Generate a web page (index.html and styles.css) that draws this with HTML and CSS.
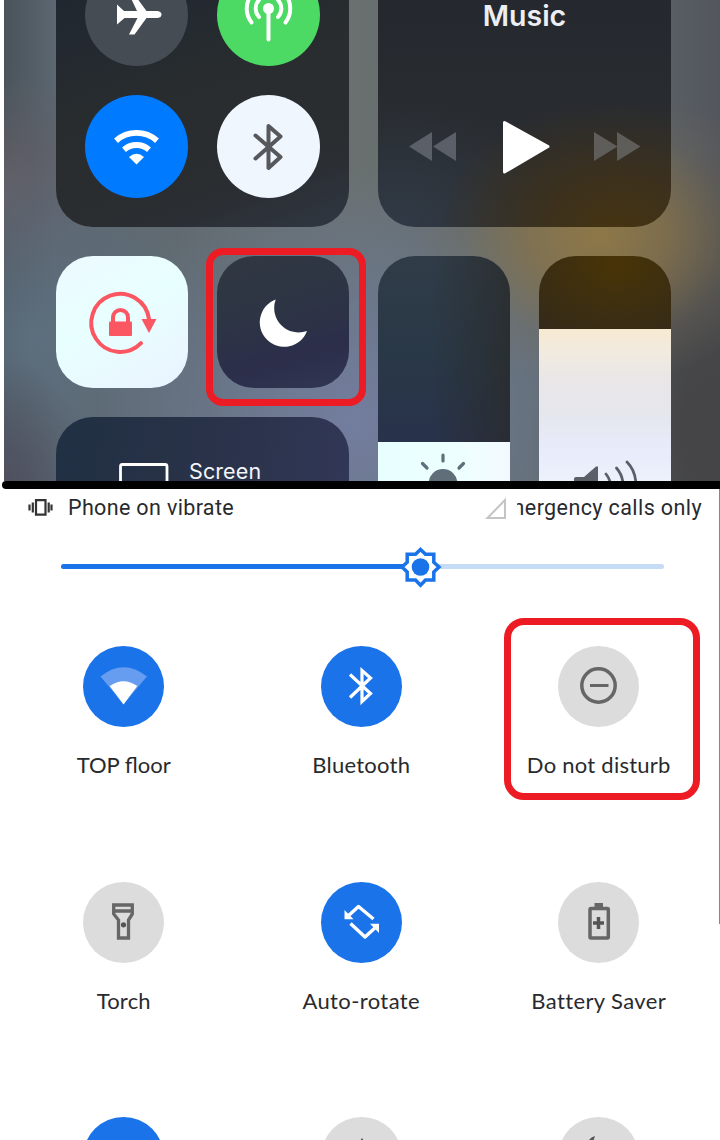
FILE: index.html
```html
<!DOCTYPE html>
<html lang="en">
<head>
<meta charset="utf-8">
<title>Do Not Disturb controls</title>
<link rel="stylesheet" href="styles.css">
</head>
<body>
<main class="page">
  <section class="control-center">
    <div class="tile connectivity">
      <div class="round airplane"><svg viewBox="85 -37 103 103"><path d="M117 4.500L124 11H137L129-6H134L146.500 11H157.500Q161.500 11.500 161.500 14.500T157.500 18H146.500L134.500 34.500H129L137.500 18H124.500L117 24.500Z" fill="#fff"/></svg></div>
      <div class="round cellular"><svg viewBox="217 -37 103 103"><g fill="none" stroke="#fff" stroke-width="4" stroke-linecap="round"><path d="M268.500 9v30.500M259 17a12.500 12.500 0 0 1 0-17M278 17a12.500 12.500 0 0 0 0-17M251.500 22.500a23 23 0 0 1 0-28M285.500 22.500a23 23 0 0 0 0-28"/></g><circle cx="268.500" cy="8.500" r="5.500" fill="#fff"/></svg></div>
      <div class="round wifi"><svg viewBox="85 95 103 103"><path d="M116 140.700a31 31 0 0 1 41 0M124 149.700a19 19 0 0 1 25 0" fill="none" stroke="#fff" stroke-width="5.800" stroke-linejoin="round"/><path d="M136.500 164.500l-7.500-7.500q7.500-6.500 15 0z" fill="#fff"/></svg></div>
      <div class="round bluetooth"><svg viewBox="217 95 103 103"><path d="M255.500 135.500l25 21.500-12 11v-42l12 10.500-25 22" fill="none" stroke="#56585c" stroke-width="4" stroke-linecap="round" stroke-linejoin="round"/></svg></div>
    </div>
    <div class="tile music">
      <div class="music-title">Music</div>
      <svg class="player" viewBox="378 112 293 70"><path d="M409 146.500l23-14.500v29zM433 146.500l23-14.500v29z" fill="#5b5f68"/><path d="M504.500 122.500v49.500l43.500-25.500z" fill="#fff" stroke="#fff" stroke-width="3" stroke-linejoin="round"/><path d="M594 132v29l23.500-14.500zM617 132v29l23.500-14.500z" fill="#5e5d5a"/></svg>
    </div>
    <div class="tile lock"><svg viewBox="56 256 132 132"><path d="M141 343.200A29 29 0 1 1 149 319" fill="none" stroke="#fb5763" stroke-width="4" stroke-linecap="round"/><path d="M141.500 319h15l-7.500 14z" fill="#fb5763"/><rect x="109" y="321.500" width="23" height="14.500" rx="1" fill="#fb5763"/><path d="M113 322v-4.500a7.500 7.500 0 0 1 15 0v4.500" fill="none" stroke="#fb5763" stroke-width="4"/></svg></div>
    <div class="tile dnd"><svg viewBox="217 256 132 132"><path d="M275.700 299.500A24.400 24.400 0 1 0 307 331 24.500 24.500 0 0 1 275.700 299.500z" fill="#fff"/></svg><span class="marker marker-moon"></span></div>
    <div class="tile brightness"><svg class="fill bright-fill" viewBox="378 442 132 39"><g fill="#5f6e78" stroke="#5f6e78" stroke-width="3.200" stroke-linecap="round"><circle cx="443" cy="483.500" r="12.800"/><path d="M443 455v6M422.500 463.500l4.500 4.500M463.500 463.500l-4.500 4.500"/></g></svg></div>
    <div class="tile volume"><svg class="fill volume-fill" viewBox="539 329 132 152"><path d="M574 492v-13q0-2 2-2h8l12-10.500h2V492z" fill="#5b5f67"/><path d="M606 474q4 5 5 12M616.500 468q6 7 6.500 16M627 462q9 9 9 24" fill="none" stroke="#5b5f67" stroke-width="2.800" stroke-linecap="round"/></svg></div>
    <div class="tile mirroring"><svg class="display-icon" viewBox="119 463 50 18"><rect x="120.500" y="464.500" width="46.500" height="40" rx="2" fill="none" stroke="#fff" stroke-width="2.800"/></svg><span class="mirroring-text">Screen</span></div>
  </section>
  <div class="divider"></div>
  <section class="quick-settings">
    <header class="status">
      <svg class="vibrate-icon" viewBox="28 496 25 21"><path d="M36 499.200h9.500v14.500H36zM32.800 501.500v10M29.500 503.500v6M48.700 501.500v10M51.500 503.500v6" fill="none" stroke="#333" stroke-width="2.200"/></svg>
      <span class="vibrate-text">Phone on vibrate</span>
      <svg class="signal-icon" viewBox="485 496 22 22"><path d="M487.500 517l17.500-18v18z" fill="none" stroke="#c4c4c4" stroke-width="2"/></svg>
      <span class="carrier"><span>Emergency calls only</span></span>
    </header>
    <div class="slider"><span class="level"></span>
      <svg class="thumb" viewBox="399 545 44 44"><path d="M420.500 549.500l5 4.800h8.300v8l5.200 4.700-5.200 4.900v8.200h-8.300l-5 5.200-5-5.200h-8.300v-8.200l-5.200-4.900 5.200-4.700v-8h8.300z" fill="#fff" stroke="#1a73e8" stroke-width="3.500"/><circle cx="420.500" cy="567" r="8.800" fill="#1a73e8"/></svg>
    </div>
    <div class="tiles">
      <div class="qs"><div class="disc on"><svg viewBox="83 646 81 81"><path d="M123.500 704l-23-27.500q23-18.500 46.500 0z" fill="#679df1"/><path d="M123.500 704.500L109.700 686q13.800-9.500 27.600 0z" fill="#fff"/></svg></div><span class="label top-floor">TOP floor</span></div>
      <div class="qs"><div class="disc on"><svg viewBox="320.500 646 81 81"><path d="M349.500 674.500l20.500 19-8.500 8v-31l8.500 7.500-20.500 19.500" fill="none" stroke="#fff" stroke-width="3.200"/></svg></div><span class="label bt">Bluetooth</span></div>
      <div class="qs"><div class="disc"><svg viewBox="558 646 81 81"><circle cx="598.500" cy="685.500" r="16.700" fill="none" stroke="#666" stroke-width="3.500"/><path d="M590 685.500h18.500" stroke="#666" stroke-width="3"/></svg></div><span class="label disturb">Do not disturb</span><span class="marker marker-disturb"></span></div>
      <div class="qs"><div class="disc"><svg viewBox="83 882 81 81"><path d="M113.700 905h18.600v9l-3.800 6v18h-10v-18l-4.800-6zM114 911h18" fill="none" stroke="#666" stroke-width="3.300"/><circle cx="123.500" cy="924.800" r="2.600" fill="#555"/></svg></div><span class="label torch">Torch</span></div>
      <div class="qs"><div class="disc on"><svg viewBox="320.500 882 81 81"><path d="M373 919l-15-12.500-11 10M350 923.500l14.500 13.500 11-10" fill="none" stroke="#fff" stroke-width="3.400" stroke-linejoin="round"/><path d="M344 910v9.200h9zM378.500 933v-9.200h-9z" fill="#fff"/></svg></div><span class="label rotate">Auto-rotate</span></div>
      <div class="qs"><div class="disc"><svg viewBox="558 882 81 81"><rect x="590" y="908.500" width="18.300" height="29.500" rx="1" fill="none" stroke="#666" stroke-width="3.500"/><path d="M594.500 903h8.500v5h-8.500z" fill="#666"/><path d="M598.500 917v12M593 923h11" stroke="#555" stroke-width="3.500"/></svg></div><span class="label battery">Battery Saver</span></div>
      <div class="qs"><div class="disc on"></div></div>
      <div class="qs"><div class="disc"><svg viewBox="320.500 1117 81 81"><path d="M359.500 1141l2-3 2 3z" fill="#555"/></svg></div></div>
      <div class="qs"><div class="disc"><svg viewBox="558 1117 81 81"><path d="M588 1142q2-5 7-6l-2 6z" fill="#555"/></svg></div></div>
    </div>
    <span class="scroll-edge"></span>
  </section>
</main>
</body>
</html>
```
FILE: styles.css
```css
* { box-sizing: border-box; }
body { margin: 0; background: #fff; }
svg { display: block; }
.page { width: 720px; height: 1140px; overflow: hidden; }

.control-center {
  height: 481px;
  margin-left: 4px;
  padding-left: 52px;
  display: grid;
  grid-template-columns: repeat(4, 132px);
  grid-template-rows: 227px 132px 64px;
  gap: 29px;
  background:
    radial-gradient(ellipse 190px 150px at 595px 235px, rgba(144,120,70,.95) 0%, rgba(138,116,72,.75) 35%, rgba(120,108,84,.25) 72%, rgba(115,108,90,0) 100%),
    radial-gradient(ellipse 190px 280px at 716px 430px, #454547 20%, rgba(72,72,75,0) 100%),
    radial-gradient(ellipse 260px 250px at 350px 420px, #737d9f 0%, rgba(108,122,148,.7) 50%, rgba(105,118,135,0) 100%),
    radial-gradient(ellipse 90px 130px at 0 490px, #50505f 0%, rgba(78,84,102,0) 100%),
    radial-gradient(ellipse 180px 190px at 30px 340px, rgba(94,112,128,.9) 0%, rgba(98,112,126,0) 100%),
    radial-gradient(ellipse 100px 120px at 0 185px, #625e66 0%, rgba(98,94,102,0) 100%),
    linear-gradient(90deg, #48535a 0, #5b6670 50px, #69706f 350px, #5f696c 600px, #53565d 716px);
}
.tile { border-radius: 37px; background: #2b303a; }
.tile svg { width: 100%; }
.connectivity {
  grid-column: span 2;
  border-radius: 0 0 37px 37px;
  padding: 0 29px;
  overflow: hidden;
  display: grid;
  grid-template-columns: 103px 103px;
  grid-template-rows: 103px 103px;
  gap: 29px;
  background: linear-gradient(160deg, #202730 0%, #292d2f 45%, #2a2d31 75%, #303742 100%);
}
.round { border-radius: 50%; transform: translateY(-37px); }
.airplane { background: #454c54; }
.cellular { background: #4cd964; }
.wifi { background: #007aff; }
.bluetooth { background: #eff6fe; }
.music {
  grid-column: span 2;
  border-radius: 0 0 37px 37px;
  display: flex;
  flex-direction: column;
  justify-content: space-between;
  padding-bottom: 45px;
  background:
    radial-gradient(ellipse 180px 125px at 240px 227px, #453412 0%, rgba(66,50,22,.75) 40%, rgba(50,45,38,0) 100%),
    radial-gradient(ellipse 160px 130px at 20px 227px, #303a46 0%, rgba(46,54,65,0) 100%),
    linear-gradient(#25292f, #2c2e31);
}
.music-title {
  height: 32px;
  text-align: center;
  font: 600 28.500px/32px Inter, sans-serif;
  color: #eceef2;
}
.lock { background: linear-gradient(150deg, #edfaff, #e8ffff 45%, #eaf3ff); }
.dnd { position: relative; background: linear-gradient(165deg, #303841, #2d3445 45%, #2c2e4a 72%, #303652); }
.brightness, .volume { grid-row: 2 / span 2; height: 225px; border-radius: 37px 37px 0 0; overflow: hidden; display: flex; flex-direction: column; justify-content: flex-end; }
.brightness { grid-column: 3; background: linear-gradient(90deg, rgba(0,0,0,0) 40%, rgba(42,41,38,.65)), linear-gradient(#303c48, #293847 45%, #28324b 83%); }
.bright-fill { height: 39px; background: linear-gradient(90deg, #e8ffff, #edffff 60%, #f3faff); }
.volume { grid-column: 4; background: radial-gradient(ellipse 120px 95px at 76px 8px, #483406, #32291b); }
.volume-fill { height: 152px; background: linear-gradient(#f7ead2 0, #f1eadf 16%, #e9e6e7 33%, #e5e7ee 58%, #e8ecfb 80%, #edf1fb); }
.mirroring {
  grid-column: 1 / span 2;
  grid-row: 3;
  border-radius: 37px 37px 0 0;
  display: flex;
  align-items: flex-start;
  padding: 46px 0 0 63px;
  background: linear-gradient(100deg, #203043, #293248 50%, #313756);
}
.mirroring .display-icon { width: 50px; height: 18px; flex: none; }
.mirroring-text { font: 400 21.500px/20px Inter, sans-serif; color: #f2f5fa; margin: -2px 0 0 20px; letter-spacing: .1px; }
.divider { height: 8px; margin-left: 2px; background: #000; border-radius: 4px 0 0 4px; }

.quick-settings { position: relative; height: 651px; color: #282a2d; }
.status { height: 37px; padding: 0 18px 0 28px; display: flex; align-items: center; font: 400 21.500px/26px Roboto, sans-serif; }
.vibrate-icon { width: 25px; height: 21px; }
.vibrate-text { margin-left: 15px; letter-spacing: .35px; }
.signal-icon { width: 22px; height: 22px; margin-left: auto; }
.carrier { width: 185px; margin-left: 10px; overflow: hidden; display: flex; justify-content: flex-end; white-space: nowrap; letter-spacing: .4px; }
.slider { margin: 38px 56px 0 61px; height: 5px; border-radius: 3px; background: #c6dbf5; position: relative; }
.level { display: block; width: 360px; height: 5px; border-radius: 3px; background: #1a73e8; }
.thumb { position: absolute; left: 338px; top: -19px; width: 44px; height: 44px; }
.tiles { margin: 77px 2px 0 5px; display: grid; grid-template-columns: repeat(3, 237.500px); grid-auto-rows: 235.500px; }
.qs { position: relative; display: flex; flex-direction: column; align-items: center; }
.disc { width: 81px; height: 81px; border-radius: 50%; background: #dcdcdc; }
.disc.on { background: #1a73e8; }
.label { margin-top: 25px; font: 400 22px/26px Lato, sans-serif; white-space: nowrap; }
.bt { letter-spacing: .25px; }
.disturb { letter-spacing: .25px; }
.torch { letter-spacing: .2px; }
.rotate { letter-spacing: .4px; }
.battery { letter-spacing: .4px; }
.marker { position: absolute; border: 7px solid #ed1c24; }
.marker-moon { inset: -8px -17px -18px -11px; border-radius: 17px; }
.marker-disturb { left: 24px; top: -28px; width: 196px; height: 182px; border-radius: 20px; }
.scroll-edge { position: absolute; right: 0; top: 0; width: 1px; height: 435px; background: #7e8991; }
```
